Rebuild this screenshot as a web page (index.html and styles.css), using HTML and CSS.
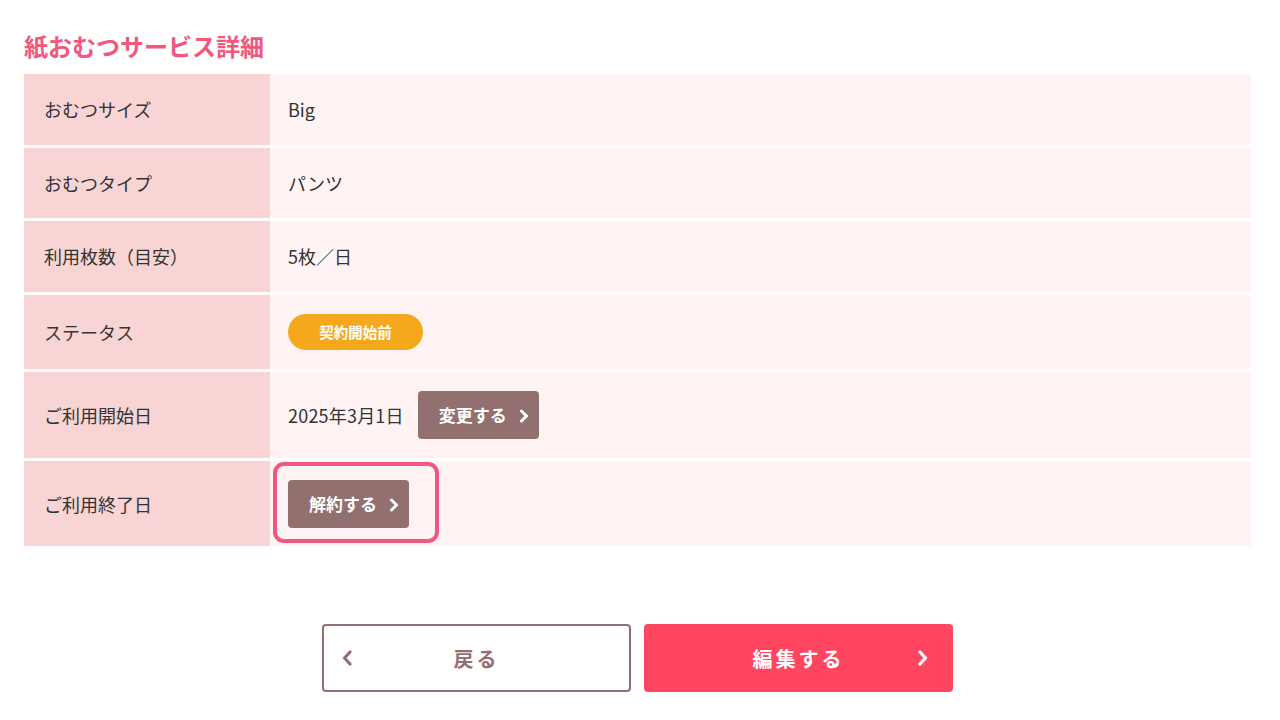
FILE: index.html
```html
<!DOCTYPE html>
<html lang="ja">
<head>
<meta charset="utf-8">
<title>紙おむつサービス詳細</title>
<link rel="stylesheet" href="styles.css">
</head>
<body>
<main class="page">
  <h1 class="title">紙おむつサービス詳細</h1>
  <div class="detail">
    <div class="row">
      <div class="label">おむつサイズ</div>
      <div class="value">Big</div>
    </div>
    <div class="row">
      <div class="label">おむつタイプ</div>
      <div class="value">パンツ</div>
    </div>
    <div class="row">
      <div class="label">利用枚数（目安）</div>
      <div class="value">5枚／日</div>
    </div>
    <div class="row">
      <div class="label">ステータス</div>
      <div class="value"><span class="badge">契約開始前</span></div>
    </div>
    <div class="row">
      <div class="label">ご利用開始日</div>
      <div class="value">
        <span class="date">2025年3月1日</span>
        <a class="small-btn change">変更する<svg class="chev" viewBox="0 0 10 14" width="10" height="14"><polyline points="2.5,2 7.5,7 2.5,12" fill="none" stroke="#fff" stroke-width="3" stroke-linecap="round" stroke-linejoin="round"/></svg></a>
      </div>
    </div>
    <div class="row last">
      <div class="label">ご利用終了日</div>
      <div class="value">
        <a class="small-btn cancel">解約する<svg class="chev" viewBox="0 0 10 14" width="10" height="14"><polyline points="2.5,2 7.5,7 2.5,12" fill="none" stroke="#fff" stroke-width="3" stroke-linecap="round" stroke-linejoin="round"/></svg><span class="highlight"></span></a>
      </div>
    </div>
  </div>
  <div class="actions">
    <a class="big-btn back"><svg class="bchev left" viewBox="0 0 12 16" width="12" height="16"><polyline points="9,2 3.5,8 9,14" fill="none" stroke="#937070" stroke-width="3.2" stroke-linecap="round" stroke-linejoin="round"/></svg><span>戻る</span></a>
    <a class="big-btn edit"><span>編集する</span><svg class="bchev right" viewBox="0 0 12 16" width="12" height="16"><polyline points="3,2 8.5,8 3,14" fill="none" stroke="#fff" stroke-width="3.2" stroke-linecap="round" stroke-linejoin="round"/></svg></a>
  </div>
</main>
</body>
</html>
```

FILE: styles.css
```css
* { box-sizing: border-box; }
html, body { margin: 0; padding: 0; background: #fff; }
body {
  font-family: "Noto Sans CJK JP", "Noto Sans", sans-serif;
  color: #333;
  font-size: 18px;
}
.page {
  padding: 28px 29px 0 24px;
}
.title {
  margin: 0 0 10px;
  font-size: 24px;
  line-height: 36px;
  font-weight: 700;
  color: #f2587e;
}
.detail {
  display: flex;
  flex-direction: column;
  gap: 3px;
}
.row {
  display: grid;
  grid-template-columns: 246px 1fr;
}
.label {
  background: #f8d4d4;
  padding: 19px 20px;
  line-height: 32.7px;
  font-weight: 400;
  display: flex;
  align-items: center;
}
.value {
  background: #fff3f3;
  padding: 19px 18px;
  line-height: 32.7px;
  display: flex;
  align-items: center;
  gap: 14px;
}
.row.last .label,
.row.last .value { padding-bottom: 18px; }
.date { letter-spacing: 0.2px; }
.badge {
  display: inline-flex;
  align-items: center;
  justify-content: center;
  width: 135px;
  height: 36px;
  border-radius: 18px;
  background: #f6a81c;
  color: #fff;
  font-size: 14.5px;
  font-weight: 700;
}
.small-btn {
  position: relative;
  display: inline-flex;
  align-items: center;
  height: 48px;
  padding: 0 10px 0 21px;
  background: #937070;
  border-radius: 4px;
  color: #fff;
  font-weight: 700;
  font-size: 17px;
  gap: 12px;
}
.small-btn .chev { margin-top: 1px; }
.highlight {
  position: absolute;
  top: -18px;
  left: -15px;
  right: -30px;
  bottom: -15px;
  border: 4px solid #f2587e;
  border-radius: 11px;
  pointer-events: none;
}
.actions {
  display: flex;
  justify-content: center;
  gap: 13px;
  margin-top: 78px;
}
.big-btn {
  position: relative;
  display: flex;
  align-items: center;
  justify-content: center;
  width: 309px;
  height: 68px;
  border-radius: 4px;
  font-size: 20px;
  font-weight: 700;
  letter-spacing: 3px;
}
.back {
  background: #fff;
  border: 2px solid #937070;
  color: #937070;
}
.edit {
  background: #ff455f;
  color: #fff;
}
.bchev {
  position: absolute;
  top: 50%;
  margin-top: -8px;
}
.bchev.left { left: 17px; }
.bchev.right { right: 24px; }
```
